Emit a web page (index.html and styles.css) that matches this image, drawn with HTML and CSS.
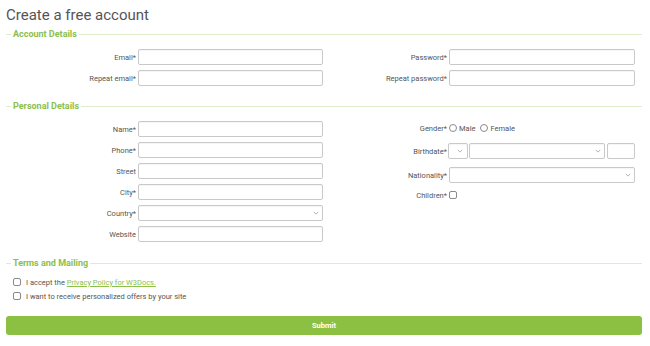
FILE: index.html
```html
<!DOCTYPE html>
<html lang="en">

<head>
    <meta charset="UTF-8">
    <meta name="viewport" content="width=device-width, initial-scale=1.0">
    <title>Create a free account</title>
    <link rel="stylesheet" href="styles.css">
</head>

<body>
    <div class="page">
        <h1 class="title">Create a free account</h1>

        <form class="signup">
            <!-- Account details -->
            <fieldset class="section">
                <legend>Account Details</legend>
                <div class="cols">
                    <div class="col col-left">
                        <div class="row"><label for="email">Email*</label><input type="email" id="email"></div>
                        <div class="row"><label for="email2">Repeat email*</label><input type="email" id="email2"></div>
                    </div>
                    <div class="col col-right">
                        <div class="row"><label for="pass">Password*</label><input type="password" id="pass"></div>
                        <div class="row"><label for="pass2">Repeat password*</label><input type="password" id="pass2"></div>
                    </div>
                </div>
            </fieldset>

            <!-- Personal details -->
            <fieldset class="section personal">
                <legend>Personal Details</legend>
                <div class="cols">
                    <div class="col col-left">
                        <div class="row"><label for="name">Name*</label><input type="text" id="name"></div>
                        <div class="row"><label for="phone">Phone*</label><input type="text" id="phone"></div>
                        <div class="row"><label for="street">Street</label><input type="text" id="street"></div>
                        <div class="row"><label for="city">City*</label><input type="text" id="city"></div>
                        <div class="row">
                            <label for="country">Country*</label>
                            <span class="select"><select id="country"><option></option></select><svg viewBox="0 0 8 5"><path d="M1 1l3 3 3-3"/></svg></span>
                        </div>
                        <div class="row"><label for="website">Website</label><input type="text" id="website"></div>
                    </div>
                    <div class="col col-right personal-right">
                        <div class="row row-gender">
                            <label>Gender*</label>
                            <div class="options">
                                <input type="radio" name="gender" id="male"><label for="male" class="opt">Male</label>
                                <input type="radio" name="gender" id="female"><label for="female" class="opt">Female</label>
                            </div>
                        </div>
                        <div class="row">
                            <label for="day">Birthdate*</label>
                            <div class="birth">
                                <span class="select day"><select id="day"><option></option></select><svg viewBox="0 0 8 5"><path d="M1 1l3 3 3-3"/></svg></span>
                                <span class="select month"><select><option></option></select><svg viewBox="0 0 8 5"><path d="M1 1l3 3 3-3"/></svg></span>
                                <input type="text" class="year">
                            </div>
                        </div>
                        <div class="row">
                            <label for="nation">Nationality*</label>
                            <span class="select"><select id="nation"><option></option></select><svg viewBox="0 0 8 5"><path d="M1 1l3 3 3-3"/></svg></span>
                        </div>
                        <div class="row row-check">
                            <label for="children">Children*</label>
                            <div class="options"><input type="checkbox" id="children"></div>
                        </div>
                    </div>
                </div>
            </fieldset>

            <!-- Terms -->
            <fieldset class="section terms">
                <legend>Terms and Mailing</legend>
                <div class="check-line"><input type="checkbox" id="accept"><label for="accept">I accept the <a href="#">Privacy Policy for W3Docs.</a></label></div>
                <div class="check-line"><input type="checkbox" id="offers"><label for="offers">I want to receive personalized offers by your site</label></div>
            </fieldset>

            <button type="button" class="submit">Submit</button>
        </form>
    </div>
</body>

</html>
```

FILE: styles.css
```css
/* Page */
body {
    margin: 0;
    font-family: Roboto, "Liberation Sans", sans-serif;
    color: #555;
    background: #fff;
}

.page {
    padding: 0 8px 0 6px;
}

.title {
    margin: 5px 0 0;
    font-size: 15px;
    line-height: 20px;
    font-weight: 400;
    color: #555;
}

/* Sections */
.section {
    margin: 3px 0 0;
    padding: 0;
    border: 0;
    border-top: 1px solid #dfeccb;
    min-width: 0;
}

.section legend {
    margin-left: 5px;
    padding: 0 2px 0 2px;
    font-size: 9px;
    line-height: 12px;
    font-weight: 700;
    color: #8cc04a;
}

.personal {
    margin-top: 14px;
}

.cols {
    display: grid;
    grid-template-columns: 318px 318px;
    padding-top: 9px;
}

.col {
    display: flex;
    flex-direction: column;
    gap: 5px;
}

.row {
    display: grid;
    align-items: center;
    column-gap: 2px;
    height: 16px;
}

.col-left .row {
    grid-template-columns: 130px 185px;
}

.col-right .row {
    grid-template-columns: 123px 186px;
}

.row > label {
    font-size: 7.5px;
    text-align: right;
    color: #555;
}

/* Fields */
input[type="text"],
input[type="email"],
input[type="password"],
select {
    box-sizing: border-box;
    width: 100%;
    height: 16px;
    margin: 0;
    padding: 0 3px;
    border: 1px solid #c9c9c9;
    border-radius: 2px;
    background: #fff;
    font: inherit;
    font-size: 8px;
    box-shadow: inset 0 1px 1px rgba(0, 0, 0, 0.04);
}

select {
    display: block;
    appearance: none;
    -webkit-appearance: none;
}

.select {
    position: relative;
    display: block;
    height: 16px;
}

.select svg {
    position: absolute;
    right: 4px;
    top: 6px;
    width: 6px;
    height: 4px;
    fill: none;
    stroke: #999;
    stroke-width: 1;
}

/* Right column of personal details */
.personal-right {
    gap: 0;
}

.personal-right .row-gender {
    height: 14px;
    margin-bottom: 8px;
}

.personal-right .row {
    margin-bottom: 8px;
}

.personal-right .row-check {
    margin: -2px 0 0;
    height: 12px;
}

.options {
    display: flex;
    align-items: center;
    font-size: 7.5px;
}

.opt {
    margin: 0 5px 0 2px;
    color: #555;
}

input[type="radio"],
input[type="checkbox"] {
    appearance: none;
    -webkit-appearance: none;
    box-sizing: border-box;
    width: 8px;
    height: 8px;
    margin: 0;
    border: 1px solid #8a8a8a;
    background: #fff;
}

input[type="radio"] {
    border-radius: 50%;
}

input[type="checkbox"] {
    border-radius: 2px;
}

.birth {
    display: flex;
    align-items: center;
    gap: 1px;
    margin-left: -1px;
}

.birth .day {
    width: 20px;
}

.birth .day svg {
    right: 5px;
}

.birth .month {
    width: 138px;
    margin-right: 1px;
}

.birth .year {
    width: 28px;
}

/* Terms */
.terms {
    margin-top: 15px;
    padding: 6px 0 0;
}

.check-line {
    display: flex;
    align-items: center;
    height: 14px;
    padding-left: 7px;
    font-size: 7.5px;
}

.check-line input {
    margin-right: 5px;
}

.check-line a {
    color: #8cc04a;
}

/* Submit */
.submit {
    display: block;
    width: 100%;
    height: 19px;
    margin-top: 13px;
    padding: 0;
    border: 0;
    border-radius: 3px;
    background: #8cc043;
    color: #fff;
    font: inherit;
    font-size: 7.5px;
    font-weight: 700;
    cursor: pointer;
}
```
